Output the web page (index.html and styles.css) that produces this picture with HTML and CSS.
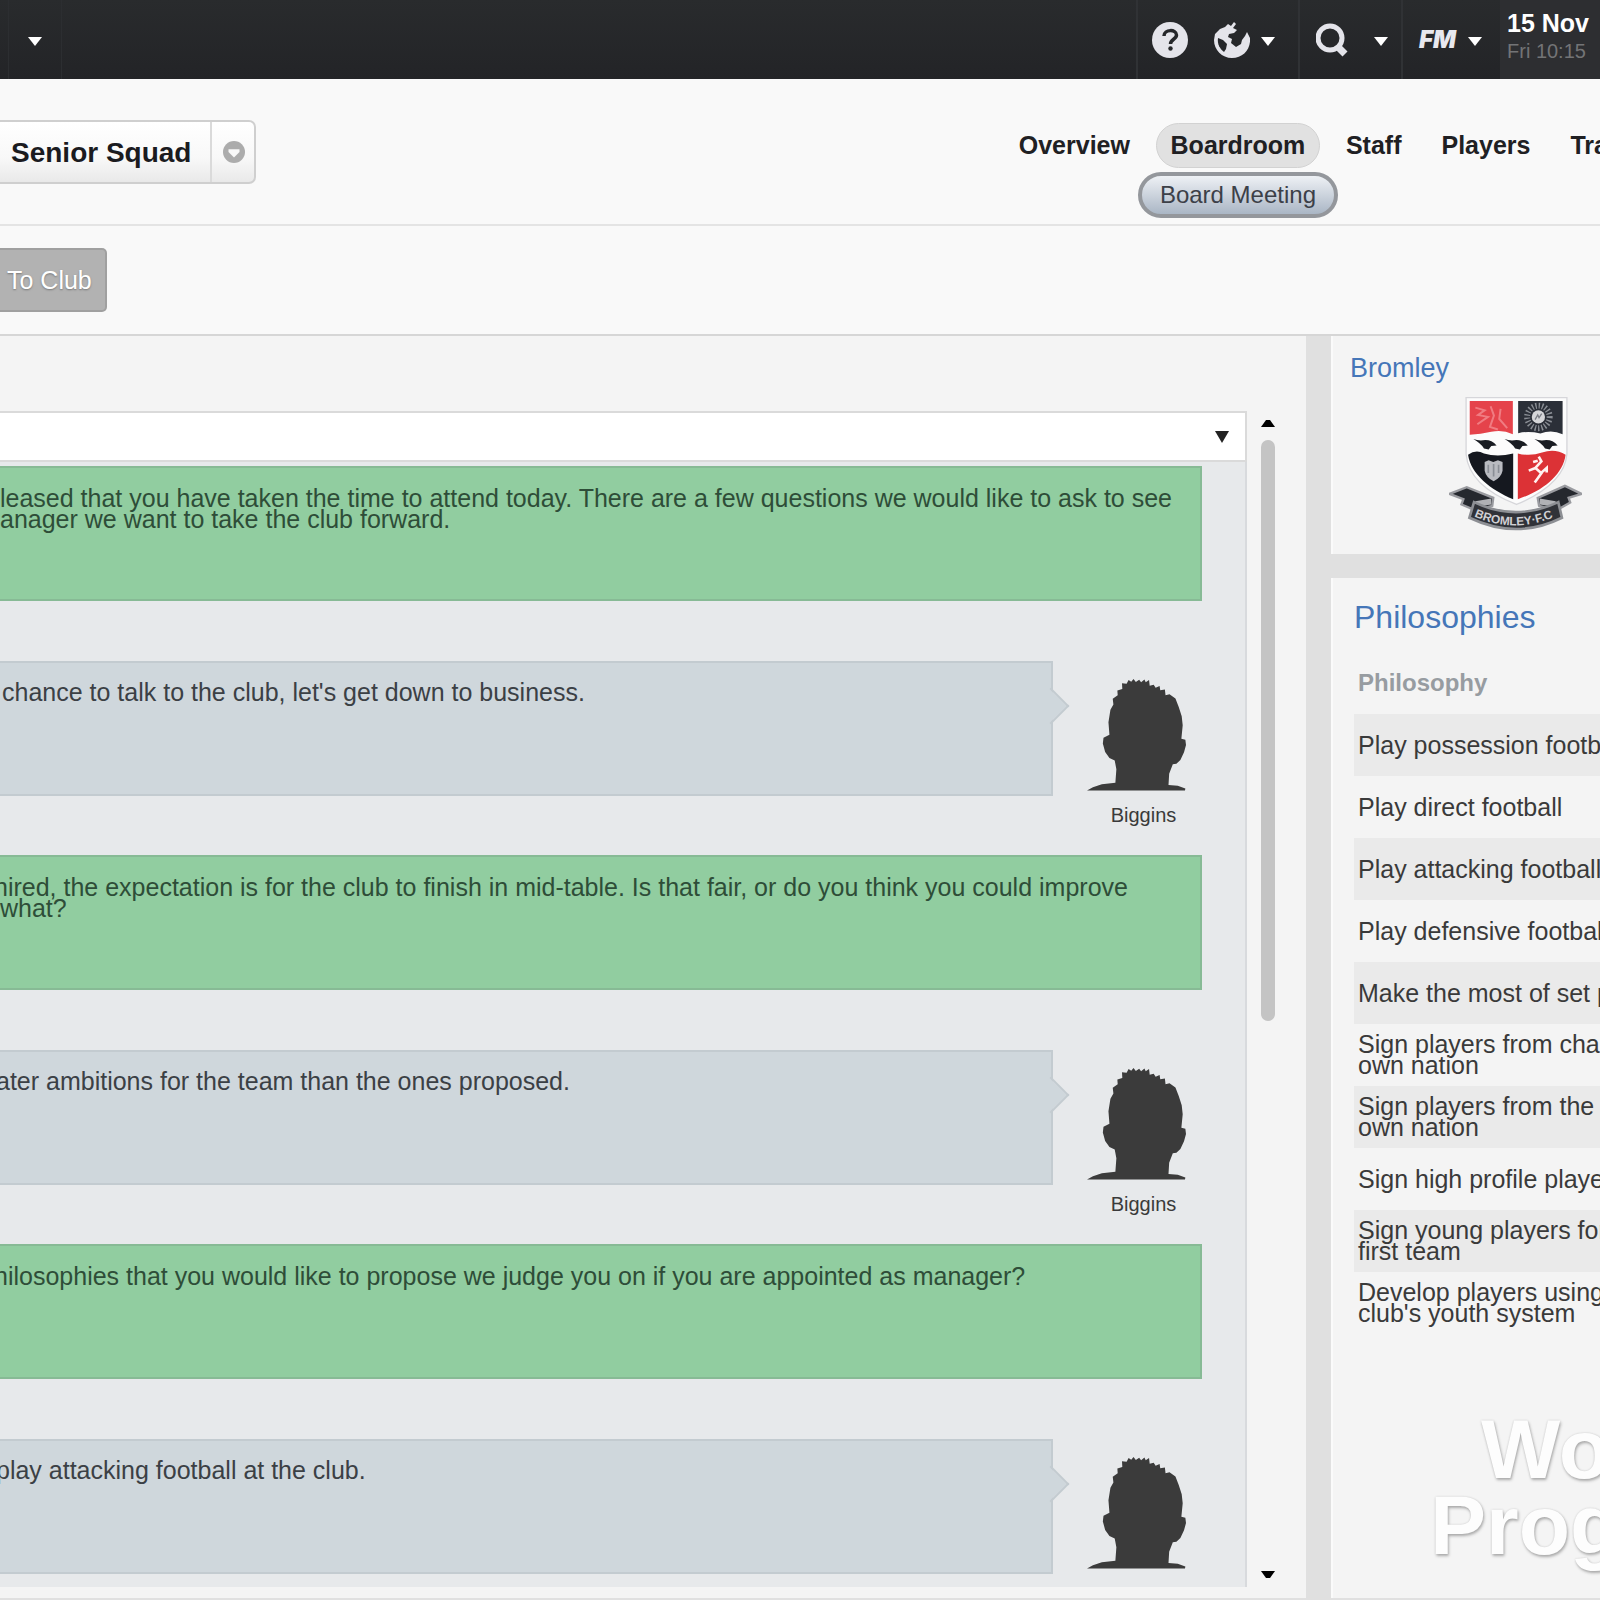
FILE: index.html
```html
<!DOCTYPE html>
<html lang="en">
<head>
    <meta charset="UTF-8">
    <meta name="viewport" content="width=device-width, initial-scale=1.0">
    <title>Board Meeting</title>
    <link rel="stylesheet" href="styles.css">
</head>
<body>
    <!-- shared shapes -->
    <svg class="defs" aria-hidden="true">
        <symbol id="arrow" viewBox="0 0 14 9"><path d="M0 0h14L7 9z"/></symbol>
        <symbol id="head" viewBox="140 112 300 342">
            <path d="M140 453L158 443L185 434L226 429L229 388L224 362L208 354L195 336L188 310L190 293L208 284L205 246L211 208L220 192L218 175L233 164L232 150L247 145L246 128L260 129L266 118L274 123L281 115L288 124L298 117L304 125L314 116L318 125L328 118L330 135L342 132L348 141L360 136L362 149L376 147L378 164L390 161L408 174L418 200L427 228L430 255L426 296L438 299L440 315L434 337L423 360L411 372L400 373L389 402L387 436L415 438L438 447L437 453z"/>
        </symbol>
    </svg>

    <header class="topbar">
        <button class="top-menu" aria-label="More"><svg class="arrow"><use href="#arrow"/></svg></button>
        <div class="top-group top-group-world">
            <button class="icon-btn" aria-label="Help">
                <svg width="36" height="36" viewBox="0 0 36 36">
                    <circle cx="18" cy="18" r="18" fill="#e4e4ea"/>
                    <path d="M12 14C12 7 24.500 7 24.500 13C24.500 17.500 18.500 17 18.500 22" fill="none" stroke="#25272a" stroke-width="3.500"/>
                    <circle cx="18.500" cy="26.500" r="2.200" fill="#25272a"/>
                </svg>
            </button>
            <button class="icon-btn" aria-label="World">
                <svg width="36" height="36" viewBox="0 0 36 36" fill="#e4e4ea">
                    <path d="M1 12L6 7L11 5L14 2L17 4L20 0L22 2L19 6L23 8L20 11L15 12L14 15L18 17L17 21L22 25L27 22L28 18L31 14L33 10L36 16C37 27 29 36 18 36C8 36 0 28 0 18z"/>
                    <path d="M4 16L9 18L13 22L12 27L10 30C6 27 3 22 4 16z" fill="#25272a"/>
                </svg>
            </button>
            <svg class="arrow"><use href="#arrow"/></svg>
        </div>
        <div class="top-group top-group-search">
            <button class="icon-btn" aria-label="Search">
                <svg width="32" height="34" viewBox="0 0 32 34" fill="none" stroke="#e4e4ea">
                    <circle cx="14" cy="15" r="12" stroke-width="5"/>
                    <path d="M21 23L29 31" stroke-width="7"/>
                </svg>
            </button>
            <svg class="arrow"><use href="#arrow"/></svg>
        </div>
        <div class="top-group top-group-fm">
            <button class="fm">FM</button>
            <svg class="arrow"><use href="#arrow"/></svg>
        </div>
        <div class="date">
            <strong>15 Nov</strong>
            <span>Fri 10:15</span>
        </div>
    </header>

    <div class="club-header">
        <button class="squad">
            <span class="squad-name">Senior Squad</span>
            <span class="squad-toggle">
                <svg width="22" height="22" viewBox="0 0 24 24">
                    <circle cx="12" cy="12" r="12" fill="#acacac"/>
                    <path d="M6 9h12v3l-6 6l-6-6z" fill="#f8f8f8"/>
                </svg>
            </span>
        </button>
        <nav class="tabs">
            <a href="#">Overview</a>
            <div class="tab-current">
                <a class="active" href="#">Boardroom</a>
                <a class="sub" href="#">Board Meeting</a>
            </div>
            <a href="#">Staff</a>
            <a href="#">Players</a>
            <a href="#">Tra</a>
        </nav>
    </div>

    <div class="toolbar">
        <button class="to-club">To Club</button>
    </div>

    <main class="content">
        <section class="meeting">
            <div class="select-wrap">
                <select aria-label="Topic"><option></option></select>
                <svg class="select-arrow" viewBox="0 0 14 12"><path d="M0 0h14L7 12z"/></svg>
            </div>
            <div class="chat">
                <p class="board">leased that you have taken the time to attend today. There are a few questions we would like to ask to see<br>anager we want to take the club forward.</p>
                <div class="reply">
                    <p>chance to talk to the club, let's get down to business.</p>
                    <figure><svg><use href="#head"/></svg><figcaption>Biggins</figcaption></figure>
                </div>
                <p class="board cut">hired, the expectation is for the club to finish in mid-table. Is that fair, or do you think you could improve<br>what?</p>
                <div class="reply">
                    <p class="cut">ater ambitions for the team than the ones proposed.</p>
                    <figure><svg><use href="#head"/></svg><figcaption>Biggins</figcaption></figure>
                </div>
                <p class="board cut">hilosophies that you would like to propose we judge you on if you are appointed as manager?</p>
                <div class="reply">
                    <p class="cut">play attacking football at the club.</p>
                    <figure><svg><use href="#head"/></svg></figure>
                </div>
            </div>
            <div class="scrollbar">
                <svg class="scroll-arrow" viewBox="0 0 14 7"><path d="M0 7L5 0h4L14 7z"/></svg>
                <div class="track"><div class="thumb"></div></div>
                <svg class="scroll-arrow" viewBox="0 0 14 7"><path d="M0 0h14L9 7H5z"/></svg>
            </div>
        </section>

        <aside class="side">
            <section class="card club">
                <h2><a href="#">Bromley</a></h2>
                <svg class="crest" viewBox="85 45 400 410" role="img" aria-label="Bromley FC crest">
                    <path d="M136 50H440V220C434 290 365 340 288 372C205 340 142 290 136 220z" fill="#fcfcfc" stroke="#d6d6da" stroke-width="4"/>
                    <path d="M147 60H277V160Q245 145 212 153Q180 160 147 162z" fill="#e5434b"/>
                    <path d="M164 80l28 8l-20 14l30 6l-32 22M210 76l10 28l-12 34l24 8M240 84l-4 30l24 28" fill="none" stroke="#f07c82" stroke-width="6"/>
                    <path d="M293 60H427V160Q394 145 360 158Q325 150 293 157z" fill="#2b2f38"/>
                    <circle cx="354" cy="108" r="34" fill="none" stroke="#8b8f96" stroke-width="18" stroke-dasharray="4 6"/>
                    <circle cx="354" cy="108" r="20" fill="#d5d6d9"/>
                    <path d="M344 116l8-14l4 8l8-12" fill="none" stroke="#7b7e86" stroke-width="4"/>
                    <g fill="#191c22">
                        <path id="bird" d="M158 175Q175 182 194 178Q214 178 228 194L212 196L204 206L190 203Q180 188 158 175z"/>
                        <use href="#bird" x="94"/>
                        <use href="#bird" x="184"/>
                    </g>
                    <path d="M142 222Q165 205 190 218Q230 230 278 218V356C210 328 150 280 142 222z" fill="#15181f"/>
                    <path d="M292 218Q330 228 365 215Q405 202 436 222C428 282 370 330 292 356z" fill="#dc3236"/>
                    <path d="M192 244L204 239L218 244L232 239L246 244V270Q242 290 219 302Q196 290 192 270z" fill="#b9bbc1"/>
                    <path d="M203 252v25M219 250v38M234 252v25" stroke="#8a8e96" stroke-width="5"/>
                    <path d="M355 228l8 14l-18 20l18 16l-20 28M345 262l-20 8M363 276l16-14v14M338 244l14-4" fill="none" stroke="#fff2f0" stroke-width="8"/>
                    <path d="M86 340L138 320L218 352L215 376L165 390L122 372L128 356z" fill="#25282e" stroke="#9a9ba0" stroke-width="7"/>
                    <path d="M484 340L434 316L352 352L356 376L408 390L450 366L445 352z" fill="#25282e" stroke="#9a9ba0" stroke-width="7"/>
                    <path d="M164 362l48-8v18l-50 8zM406 362l-48-8v18l50 8z" fill="#b0b1b5"/>
                    <path d="M160 365Q285 425 414 365L425 412Q288 480 146 412z" fill="#303238" stroke="#8d8f94" stroke-width="8"/>
                    <path id="ribbon" d="M160 408Q287 464 414 404" fill="none"/>
                    <text class="crest-text"><textPath href="#ribbon">BROMLEY·F.C</textPath></text>
                </svg>
            </section>
            <section class="card philosophies">
                <h2><a href="#">Philosophies</a></h2>
                <table>
                    <thead><tr><th>Philosophy</th></tr></thead>
                    <tbody>
                        <tr><td>Play possession footb</td></tr>
                        <tr><td>Play direct football</td></tr>
                        <tr><td>Play attacking football</td></tr>
                        <tr><td>Play defensive football</td></tr>
                        <tr><td>Make the most of set p</td></tr>
                        <tr><td>Sign players from cha<br>own nation</td></tr>
                        <tr><td>Sign players from the c<br>own nation</td></tr>
                        <tr><td>Sign high profile playe</td></tr>
                        <tr><td>Sign young players for<br>first team</td></tr>
                        <tr><td>Develop players using<br>club's youth system</td></tr>
                    </tbody>
                </table>
                <p class="watermark">Wo<br>Prog</p>
            </section>
        </aside>
    </main>
</body>
</html>
```
FILE: styles.css
```css
* {
    box-sizing: border-box;
}
body {
    margin: 0;
    height: 100vh;
    display: flex;
    flex-direction: column;
    overflow: hidden;
    background: #f9f9f9;
    color: #3a3a3a;
    font-family: "Liberation Sans", Arial, sans-serif;
    font-size: 25px;
    line-height: 21px;
}
a {
    color: inherit;
    text-decoration: none;
}
button {
    font: inherit;
    color: inherit;
    border: none;
    background: none;
    padding: 0;
    cursor: pointer;
}
p, h2, figure {
    margin: 0;
}
svg {
    display: block;
    flex: none;
}
.defs {
    position: absolute;
    width: 0;
    height: 0;
}

/* top bar */
.topbar {
    display: flex;
    flex: none;
    height: 79px;
    background: linear-gradient(#292b2d, #232427);
}
.top-menu {
    width: 54px;
    margin: 0 auto 0 8px;
    padding-left: 19px;
    border-left: 1px solid #2c2e31;
    border-right: 1px solid #2c2e31;
}
.arrow {
    width: 14px;
    height: 9px;
    fill: #fff;
    margin-top: 4px;
}
.top-group {
    display: flex;
    align-items: center;
    border-left: 2px solid #303235;
}
.top-group-world {
    width: 162px;
    padding-left: 14px;
    gap: 26px;
}
.top-group-world .arrow {
    margin-left: -15px;
}
.top-group-search {
    width: 103px;
    padding-left: 16px;
    gap: 26px;
}
.top-group-fm {
    width: 99px;
    padding-left: 16px;
    gap: 12px;
}
.fm {
    font-family: Inter, sans-serif;
    font-size: 24px;
    font-weight: 900;
    font-style: italic;
    color: #e8e8ee;
}
.date {
    width: 100px;
    padding: 9px 0 0 7px;
    background: #2d2e31;
    white-space: nowrap;
}
.date strong, .date span {
    display: block;
    line-height: 28px;
}
.date strong {
    color: #fff;
}
.date span {
    font-size: 20px;
    color: #737476;
}

/* club header */
.club-header {
    display: flex;
    flex: none;
    align-items: flex-start;
    justify-content: space-between;
    height: 147px;
    padding-top: 41px;
    border-bottom: 2px solid #e4e4e4;
}
.squad {
    display: flex;
    height: 64px;
    border: 2px solid #cfcfcf;
    border-left: none;
    border-radius: 0 7px 7px 0;
    background: linear-gradient(#fff, #f8f8f8 60%, #e9e9e9);
    color: #1b1b1f;
    font-size: 28px;
    font-weight: bold;
}
.squad-name, .squad-toggle {
    display: flex;
    align-items: center;
    height: 100%;
}
.squad-name {
    padding: 0 19px 0 11px;
}
.squad-toggle {
    padding: 0 9px 0 11px;
    border-left: 2px solid #dadada;
}
.tabs {
    display: flex;
    margin-right: -8px;
    color: #202023;
    font-weight: bold;
    line-height: 45px;
}
.tabs > a {
    padding: 3px 20px;
}
.tabs > a:last-child {
    padding-right: 0;
}
.tab-current {
    display: flex;
    flex-direction: column;
    align-items: center;
    gap: 4px;
    width: 176px;
    padding-top: 3px;
}
.active {
    padding: 0 14px;
    border: 1px solid #d2d2d2;
    border-radius: 23px;
    background: #e1e1e1;
    line-height: 43px;
}
.sub {
    padding: 0 18px;
    border: 4px solid #94979c;
    border-radius: 24px;
    background: linear-gradient(#eef1f5, #aab6c5);
    color: #3c4048;
    font-size: 24px;
    font-weight: normal;
    line-height: 38px;
    white-space: nowrap;
}

.toolbar {
    flex: none;
    height: 108px;
    padding-top: 22px;
}
.to-club {
    height: 64px;
    padding: 0 13px 0 7px;
    border: 2px solid #a0a0a0;
    border-left: none;
    border-radius: 0 5px 5px 0;
    background: #b2b2b2;
    color: #fff;
    text-shadow: 0 1px 2px #777;
}

/* content */
.content {
    display: grid;
    grid-template-columns: 1fr 269px;
    gap: 25px;
    flex: 1;
    min-height: 0;
    padding-bottom: 2px;
    border-top: 2px solid #d6d6d6;
    background: #e0e0e0;
}
.meeting {
    display: grid;
    grid-template-columns: 1fr 59px;
    grid-template-rows: 51px 1fr;
    min-height: 0;
    padding: 75px 0 11px;
    background: #f4f4f4;
}
.select-wrap {
    position: relative;
    border: 2px solid #dadada;
    border-left: none;
}
.select-wrap select {
    display: block;
    width: 100%;
    height: 100%;
    border: none;
    background: #fff;
    appearance: none;
    font: inherit;
}
.select-arrow {
    position: absolute;
    top: 18px;
    right: 16px;
    width: 14px;
    height: 12px;
    fill: #222;
    pointer-events: none;
}
.chat {
    grid-column: 1;
    grid-row: 2;
    overflow: hidden;
    padding: 4px 43px 0 0;
    border-right: 2px solid #d8dadd;
    background: #e7e9eb;
}
.board {
    min-height: 135px;
    margin-bottom: 60px;
    padding-top: 20px;
    border: 2px solid #87ba95;
    border-left: none;
    background: #91cda0;
    color: #2e4d38;
    white-space: nowrap;
}
.reply {
    display: flex;
    align-items: flex-start;
    gap: 34px;
    margin-bottom: 28px;
}
.reply p {
    position: relative;
    flex: 1;
    min-height: 135px;
    padding: 19px 0 0 2px;
    border: 2px solid #c3cbd0;
    border-left: none;
    background: #cfd7dc;
    color: #3b4045;
}
/* first line runs under the left edge of the window */
.cut {
    text-indent: -6px;
}
/* speech pointer */
.reply p::after {
    content: "";
    position: absolute;
    top: 30px;
    right: -13px;
    width: 24px;
    height: 24px;
    border: 2px solid #c3cbd0;
    border-left: none;
    border-bottom: none;
    background: linear-gradient(45deg, transparent 50%, #cfd7dc 50%);
    transform: rotate(45deg);
}
.reply figure {
    margin: 17px 16px 0 0;
}
.reply svg {
    width: 99px;
    height: 113px;
    fill: #3b3b3b;
}
figcaption {
    margin-top: 12px;
    padding-left: 14px;
    font-size: 20px;
    line-height: 24px;
    text-align: center;
}
.scrollbar {
    grid-column: 2;
    grid-row: 1 / 3;
    display: flex;
    flex-direction: column;
    align-items: center;
    gap: 13px;
    padding: 9px 17px 9px 0;
}
.scroll-arrow {
    width: 14px;
    height: 7px;
}
.track {
    flex: 1;
    width: 14px;
}
.thumb {
    height: 52%;
    border-radius: 7px;
    background: #c4c4c4;
}

/* sidebar */
.side {
    display: flex;
    flex-direction: column;
    gap: 24px;
    min-width: 0;
    overflow: hidden;
}
.card {
    background: #f4f4f4;
    border-left: 2px solid #fafafa;
}
.card h2 {
    color: #4576b8;
    font-weight: normal;
}
.club {
    padding: 22px 18px 22px 17px;
}
.club h2 {
    font-size: 27px;
}
.crest {
    width: 133px;
    height: 136px;
    margin: 17px 0 0 auto;
}
.crest-text {
    fill: #d0d0d4;
    font-size: 36px;
    font-weight: bold;
}
.philosophies {
    flex: 1;
    padding: 25px 0 0 21px;
    overflow: hidden;
}
.philosophies h2 {
    font-size: 32px;
    line-height: 28px;
}
table {
    width: 100%;
    border-collapse: collapse;
    white-space: nowrap;
    table-layout: fixed;
}
th, td {
    padding: 0 0 0 4px;
    text-align: left;
}
th {
    height: 83px;
    padding-top: 20px;
    color: #979ca1;
    font-size: 24px;
}
td {
    height: 62px;
}
tbody tr:nth-child(odd) {
    background: #eaeaea;
}
.watermark {
    margin: 77px 0 0 76px;
    color: #fdfdfd;
    font-size: 84px;
    font-weight: bold;
    line-height: 76px;
    text-indent: 51px;
    text-shadow: 1px 2px 3px #aaa, 0 0 2px #ccc;
}
```
